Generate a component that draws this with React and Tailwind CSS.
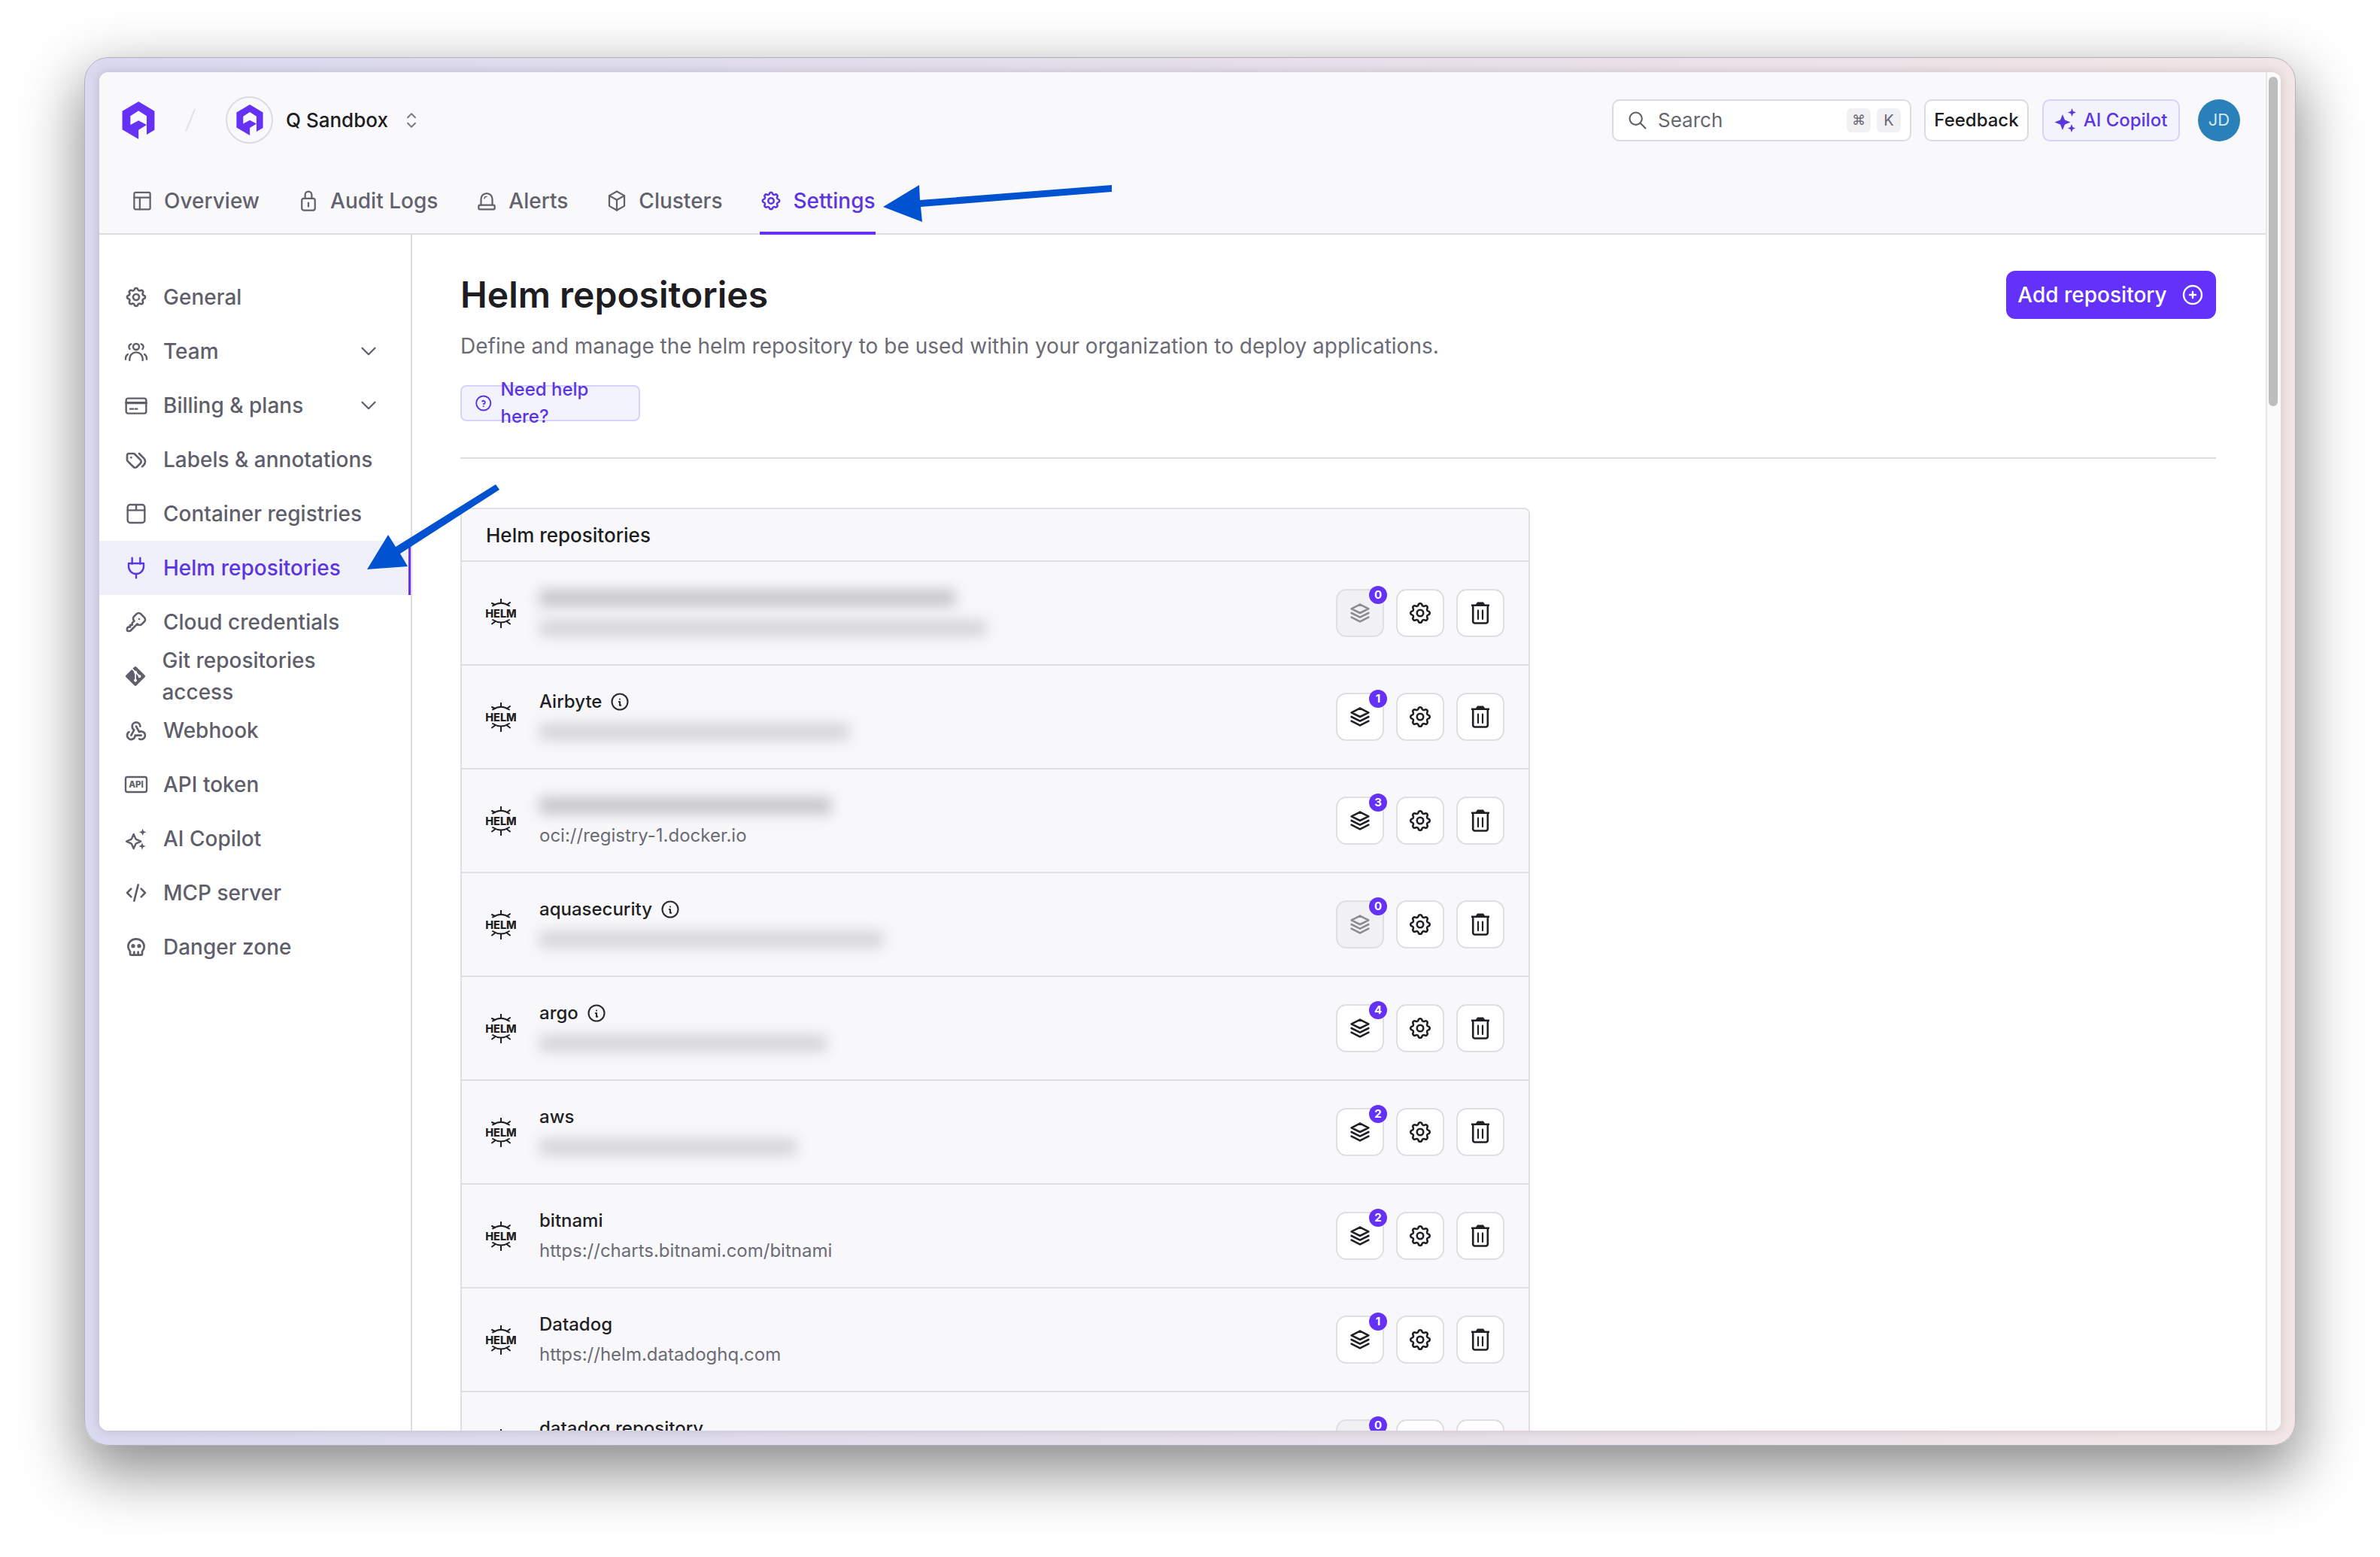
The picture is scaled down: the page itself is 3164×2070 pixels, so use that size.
import React from "react";
import {
  TbSettings,
  TbStack2,
  TbChevronDown,
  TbSelector,
  TbSearch,
  TbTags,
  TbKey,
  TbWebhook,
  TbCode,
  TbSkull,
  TbBrandGit,
  TbCirclePlus,
  TbHelpCircle,
  TbInfoCircle,
} from "react-icons/tb";
import { SiGit } from "react-icons/si";

const Logo = ({ className }) => (
  <svg viewBox="38 30 127 148" className={className} fill="#6431f5">
    <path d="M102 30L165 68V142L134 160V87L102 66L70 87V122L102 105L134 122L102 142V178L38 140V68Z" />
  </svg>
);

const Outline = ({ children, size = 32, className = "" }) => (
  <svg
    viewBox="0 0 24 24"
    width={size}
    height={size}
    fill="none"
    stroke="currentColor"
    strokeWidth="1.8"
    strokeLinecap="round"
    strokeLinejoin="round"
    className={className}
  >
    {children}
  </svg>
);

// Sidebar and tab icons the packages don't carry in this exact shape
const TeamIcon = (p) => (
  <Outline {...p}>
    <circle cx="12" cy="7.5" r="3" />
    <path d="M5.5 21v-1.5a6.5 6.5 0 0 1 13 0V21" />
    <path d="M7 4.8a3 3 0 0 0-1.4 5" />
    <path d="M17 4.8a3 3 0 0 1 1.4 5" />
    <path d="M1.5 20v-1a5 5 0 0 1 2.2-4" />
    <path d="M22.5 20v-1a5 5 0 0 0-2.2-4" />
  </Outline>
);

const CardIcon = (p) => (
  <Outline {...p}>
    <rect x="2" y="5" width="20" height="15" rx="2" />
    <path d="M2 9.5h20" strokeWidth="2.4" />
    <path d="M6 15.5h3M11 15.5h2" />
  </Outline>
);

const BoxIcon = (p) => (
  <Outline {...p}>
    <rect x="3.5" y="3" width="17" height="18" rx="2.5" />
    <path d="M3.5 8.5h17M12 3v5.5" />
  </Outline>
);

const PlugIcon = (p) => (
  <Outline {...p}>
    <path d="M8 2v6M16 2v6" />
    <path d="M4.5 7.5h15v3a7.5 7.5 0 0 1-15 0z" />
    <path d="M12 18v4" />
  </Outline>
);

const ApiIcon = (p) => (
  <Outline {...p}>
    <rect x="1.5" y="4.5" width="21" height="15" rx="1.8" />
    <text x="12" y="15.2" textAnchor="middle" fontSize="8.6" fontWeight="800" fontFamily="Inter, sans-serif" fill="currentColor" stroke="none">
      API
    </text>
  </Outline>
);

const SparkOutline = (p) => (
  <Outline {...p}>
    <path d="M9.5 7.5l2.2 5 5 2.2-5 2.2-2.2 5-2.2-5-5-2.2 5-2.2z" />
    <path d="M18.5 2l1 2.5 2.5 1-2.5 1-1 2.5-1-2.5-2.5-1 2.5-1z" fill="currentColor" stroke="none" />
    <path d="M18 16l1 2.5 2.5 1-2.5 1-1 2.5-1-2.5-2.5-1 2.5-1z" fill="currentColor" stroke="none" />
  </Outline>
);

const SparkFilled = ({ className }) => (
  <svg viewBox="0 0 28 32" width="28" height="32" fill="currentColor" className={className}>
    <path d="M10 8l3 7.5 7.5 3-7.5 3-3 7.5-3-7.5-7.5-3 7.5-3z" />
    <path d="M22.5 0l1.5 4 4 1.5-4 1.5-1.5 4-1.5-4-4-1.5 4-1.5z" />
    <path d="M22 21l1.5 4 3.5 1.5-3.5 1.5-1.5 4-1.5-4-3.5-1.5 3.5-1.5z" />
  </svg>
);

const LayoutIcon = (p) => (
  <Outline {...p}>
    <rect x="3.5" y="3" width="17" height="18" rx="1.5" />
    <path d="M3.5 8.5h17M9.5 8.5V21" />
  </Outline>
);

const LockIcon = (p) => (
  <Outline {...p}>
    <rect x="5" y="9.5" width="14" height="12.5" rx="2" />
    <path d="M8.5 9.5V5.5a3.5 3.5 0 0 1 7 0v4" />
    <path d="M12 14v4" />
  </Outline>
);

const AlertIcon = (p) => (
  <Outline {...p}>
    <path d="M6 16.5V10a6 6 0 0 1 12 0v6.5" />
    <rect x="3.5" y="16.5" width="17" height="4.5" rx="1.2" />
    <path d="M12 7.5a2.5 2.5 0 0 0-2.5 2" strokeWidth="1.2" />
  </Outline>
);

const ClusterIcon = (p) => (
  <Outline {...p}>
    <path d="M12 2l8 4.5v11L12 22l-8-4.5v-11z" />
    <path d="M4 6.5l8 4.5 8-4.5M12 11v11" />
  </Outline>
);

const tabs = [
  { label: "Overview", Icon: LayoutIcon },
  { label: "Audit Logs", Icon: LockIcon },
  { label: "Alerts", Icon: AlertIcon },
  { label: "Clusters", Icon: ClusterIcon },
  { label: "Settings", Icon: TbSettings, active: true },
];

const sidebar = [
  { label: "General", Icon: TbSettings },
  { label: "Team", Icon: TeamIcon, chevron: true },
  { label: "Billing & plans", Icon: CardIcon, chevron: true },
  { label: "Labels & annotations", Icon: TbTags },
  { label: "Container registries", Icon: BoxIcon },
  { label: "Helm repositories", Icon: PlugIcon, active: true },
  { label: "Cloud credentials", Icon: TbKey },
  { label: "Git repositories access", Icon: SiGit, git: true },
  { label: "Webhook", Icon: TbWebhook },
  { label: "API token", Icon: ApiIcon },
  { label: "AI Copilot", Icon: SparkOutline },
  { label: "MCP server", Icon: TbCode },
  { label: "Danger zone", Icon: TbSkull },
];

// blur: width of the smudged text in px, null when the text is readable
const repos = [
  { nameBlur: 553, urlBlur: 594, count: 0 },
  { name: "Airbyte", info: true, urlBlur: 412, count: 1 },
  { nameBlur: 388, url: "oci://registry-1.docker.io", count: 3 },
  { name: "aquasecurity", info: true, urlBlur: 457, count: 0 },
  { name: "argo", info: true, urlBlur: 382, count: 4 },
  { name: "aws", urlBlur: 342, count: 2 },
  { name: "bitnami", url: "https://charts.bitnami.com/bitnami", count: 2 },
  { name: "Datadog", url: "https://helm.datadoghq.com", count: 1 },
  { name: "datadog repository", url: "https://helm.datadoghq.com", count: 0 },
];

const HelmIcon = () => (
  <svg viewBox="0 0 40 39" width="40" height="39" className="shrink-0 text-[#1f1f24]">
    <g fill="none" stroke="currentColor" strokeWidth="2" strokeLinecap="round">
      <path d="M9 9.5Q20 2 31 9.5" />
      <path d="M20 0.5V6M8 6L12 8M32 5L28 8" />
      <path d="M9 28Q20 35 31 28" />
      <path d="M20 32V38.5M8 33.5L12 30.5M32 33.5L28 30.5" />
    </g>
    <text x="20" y="24.5" textAnchor="middle" fontSize="14.5" fontWeight="800" fontFamily="Inter, sans-serif" fill="currentColor">
      HELM
    </text>
  </svg>
);

const TrashIcon = () => (
  <svg viewBox="0 0 24 30" width="24" height="30" fill="none" stroke="currentColor" strokeLinecap="round">
    <path d="M8 0.5h8l2 3h6v2.5H0V3.5h6z" fill="currentColor" stroke="none" />
    <path d="M2.2 6.5V26a2.5 2.5 0 0 0 2.5 2.5h14.6a2.5 2.5 0 0 0 2.5-2.5V6.5" strokeWidth="2.6" />
    <path d="M9 11.5V23M15 11.5V23" strokeWidth="2.2" />
  </svg>
);

const Blur = ({ width, dark }) => (
  <div
    className={`h-[22px] blur-[9px] ${dark ? "bg-[#c4c4c8]" : "bg-[#d4d4d8]"}`}
    style={{ width }}
  />
);

const RepoRow = ({ repo }) => {
  const empty = repo.count === 0;
  return (
    <div className="flex h-[138px] shrink-0 items-center border-b-2 border-[#dedee3] bg-[#f8f8fb] pl-[32px] pr-[32px]">
      <HelmIcon />
      <div className="ml-[31px] flex min-w-0 flex-col gap-[4px]">
        <div className="flex h-[36px] items-center gap-[10px]">
          {repo.nameBlur ? (
            <Blur width={repo.nameBlur} dark />
          ) : (
            <span className="text-[24px] font-medium text-[#1f1f24]">{repo.name}</span>
          )}
          {repo.info && <TbInfoCircle size={28} strokeWidth={1.8} className="text-[#2a2a30]" />}
        </div>
        <div className="flex h-[36px] items-center">
          {repo.urlBlur ? (
            <Blur width={repo.urlBlur} />
          ) : (
            <span className="text-[24px] text-[#6b6b76]">{repo.url}</span>
          )}
        </div>
      </div>
      <div className="ml-auto flex gap-[16px]">
        <div
          className={`relative flex h-[64px] w-[64px] items-center justify-center rounded-[14px] border-2 border-[#dedee3] ${
            empty ? "bg-[#f1f1f4] text-[#8b8b92]" : "bg-white text-[#1f1f24]"
          }`}
        >
          <TbStack2 size={34} strokeWidth={1.9} />
          <span className="absolute right-[-6px] top-[-6px] flex h-[24px] w-[24px] items-center justify-center rounded-full bg-[#6431f5] text-[15px] font-bold text-white">
            {repo.count}
          </span>
        </div>
        <div className="flex h-[64px] w-[64px] items-center justify-center rounded-[14px] border-2 border-[#dedee3] bg-white text-[#1f1f24]">
          <TbSettings size={34} strokeWidth={1.8} />
        </div>
        <div className="flex h-[64px] w-[64px] items-center justify-center rounded-[14px] border-2 border-[#dedee3] bg-white text-[#1f1f24]">
          <TrashIcon />
        </div>
      </div>
    </div>
  );
};

const Header = () => (
  <header className="flex h-[216px] shrink-0 flex-col border-b-2 border-[#dcdce1] bg-[#f9f9fb]">
    <div className="flex h-[63px] mt-[32px] items-center pl-[30px] pr-[34px]">
      <Logo className="h-[50px] w-[44px]" />
      <div className="ml-[46px] h-[32px] w-[2px] rotate-[22deg] bg-[#e2e2e6]" />
      <div className="ml-[46px] flex h-[63px] w-[63px] items-center justify-center rounded-full border-2 border-[#dcdce0]">
        <Logo className="h-[41px] w-[36px]" />
      </div>
      <span className="ml-[17px] text-[26px] font-medium text-[#1d1d22]">Q Sandbox</span>
      <TbSelector size={30} strokeWidth={1.5} className="ml-[16px] text-[#77777f]" />

      <div className="ml-auto flex h-[56px] w-[398px] items-center rounded-[10px] border-2 border-[#dcdce0] bg-white pl-[18px] pr-[12px]">
        <TbSearch size={28} strokeWidth={1.8} className="text-[#5f5f68]" />
        <span className="ml-[13px] text-[26px] text-[#66666f]">Search</span>
        <span className="ml-auto flex h-[32px] w-[32px] items-center justify-center rounded-[6px] bg-[#f1f1f4] font-['Noto_Sans',sans-serif] text-[18px] text-[#66666f]">
          ⌘
        </span>
        <span className="ml-[8px] flex h-[32px] w-[32px] items-center justify-center rounded-[6px] bg-[#f1f1f4] text-[20px] text-[#66666f]">
          K
        </span>
      </div>
      <div className="ml-[17px] flex h-[56px] w-[139px] items-center justify-center rounded-[10px] border-2 border-[#dcdce0] bg-white text-[24px] font-medium text-[#1d1d22]">
        Feedback
      </div>
      <div className="ml-[18px] flex h-[56px] w-[183px] items-center justify-center gap-[10px] rounded-[10px] border-2 border-[#d6d3fb] bg-[#f3f3fe] text-[24px] font-medium text-[#5b35e0]">
        <SparkFilled className="text-[#5b35e0]" />
        AI Copilot
      </div>
      <div className="ml-[24px] flex h-[56px] w-[56px] items-center justify-center rounded-full bg-[#2a80b9] text-[22px] text-[#d7e8f3]">
        JD
      </div>
    </div>
    <nav className="mt-auto flex gap-[50px] pl-[42px]">
      {tabs.map(({ label, Icon, active }) => (
        <div
          key={label}
          className={`mb-[-2px] flex h-[76px] items-center gap-[14px] border-b-4 pb-[10px] ${
            active ? "border-[#6431f5] text-[#5b35e0]" : "border-transparent text-[#62626d]"
          }`}
        >
          <Icon size={30} />
          <span className="text-[28px] font-medium">{label}</span>
        </div>
      ))}
    </nav>
  </header>
);

const Sidebar = () => (
  <aside className="flex w-[416px] shrink-0 flex-col border-r-2 border-[#dcdce1] bg-white pt-[47px]">
    {sidebar.map(({ label, Icon, chevron, active, git }) => (
      <div
        key={label}
        className={`flex h-[72px] shrink-0 items-center gap-[20px] pl-[33px] pr-[39px] ${
          active ? "border-r-[3px] border-[#6431f5] bg-[#f0f0fb] text-[#5b35e0]" : "text-[#5f5f6b]"
        }`}
      >
        <span className="flex w-[32px] justify-center">
          <Icon size={git ? 26 : 32} />
        </span>
        <span className="text-[28px] font-medium">{label}</span>
        {chevron && <TbChevronDown size={34} strokeWidth={1.6} className="ml-auto" />}
      </div>
    ))}
  </aside>
);

export default function App() {
  return (
    <div className="relative h-screen w-screen overflow-hidden bg-white pl-[112px] pt-[76px] font-['Inter',sans-serif]">
      <div className="h-[1846px] w-[2940px] rounded-[32px] border border-[#b0b0b8] bg-gradient-to-r from-[#d9d9ef] to-[#f2e5e6] p-[19px] shadow-[0_30px_80px_6px_rgba(0,0,0,0.45)]">
        <div className="flex h-full w-full overflow-hidden rounded-[12px] bg-white shadow-[0_0_14px_rgba(0,0,0,0.15)]">
          <div className="flex w-[2880px] shrink-0 flex-col overflow-hidden">
            <Header />
            <div className="flex min-h-0 flex-1">
              <Sidebar />
              <main className="min-w-0 flex-1 overflow-hidden bg-white pl-[64px] pr-[66px] pt-[48px]">
                <div className="flex items-start justify-between">
                  <h1 className="h-[64px] text-[48px] font-semibold leading-[64px] text-[#1d1d22]">Helm repositories</h1>
                  <button className="flex h-[64px] w-[279px] items-center justify-center gap-[18px] rounded-[12px] bg-[#6431fb] text-[28px] font-medium text-white">
                    Add repository
                    <TbCirclePlus size={32} strokeWidth={1.8} />
                  </button>
                </div>
                <p className="mt-[16px] text-[28px] leading-[40px] text-[#6b6b76]">
                  Define and manage the helm repository to be used within your organization to deploy applications.
                </p>
                <div className="mt-[32px] flex h-[48px] w-[239px] items-center gap-[10px] rounded-[8px] border-2 border-[#d6d3fb] bg-[#f3f3fe] pl-[16px] text-[24px] font-medium text-[#5b35e0]">
                  <TbHelpCircle size={26} strokeWidth={1.8} />
                  Need help here?
                </div>
                <div className="mt-[48px] h-[2px] bg-[#dcdce1]" />
                <section className="mt-[65px] flex w-[1422px] flex-col overflow-hidden rounded-t-[8px] border-x-2 border-t-2 border-[#dedee3]">
                  <div className="flex h-[70px] shrink-0 items-center border-b-2 border-[#dedee3] bg-[#f8f8fb] pl-[32px] text-[26px] font-medium text-[#1d1d22]">
                    Helm repositories
                  </div>
                  {repos.map((repo, i) => (
                    <RepoRow key={i} repo={repo} />
                  ))}
                </section>
              </main>
            </div>
          </div>
          <div className="flex-1 border-l-2 border-[#e6e6e8] bg-[#fafafa] pl-[2px] pt-[6px]">
            <div className="h-[438px] w-[12px] rounded-full bg-[#bdbdbd]" />
          </div>
        </div>
      </div>

      {/* Annotation arrows drawn over the screenshot */}
      <svg viewBox="0 0 3164 2070" className="pointer-events-none absolute left-0 top-0 h-[2070px] w-[3164px]" fill="#0052d0">
        <path d="M1174 275L1222 246L1223 266L1478 246V255L1224 275L1226 295Z" />
        <path d="M488 757L516 711L526 727L659 644L664 651L532 736L542 753Z" />
      </svg>
    </div>
  );
}
